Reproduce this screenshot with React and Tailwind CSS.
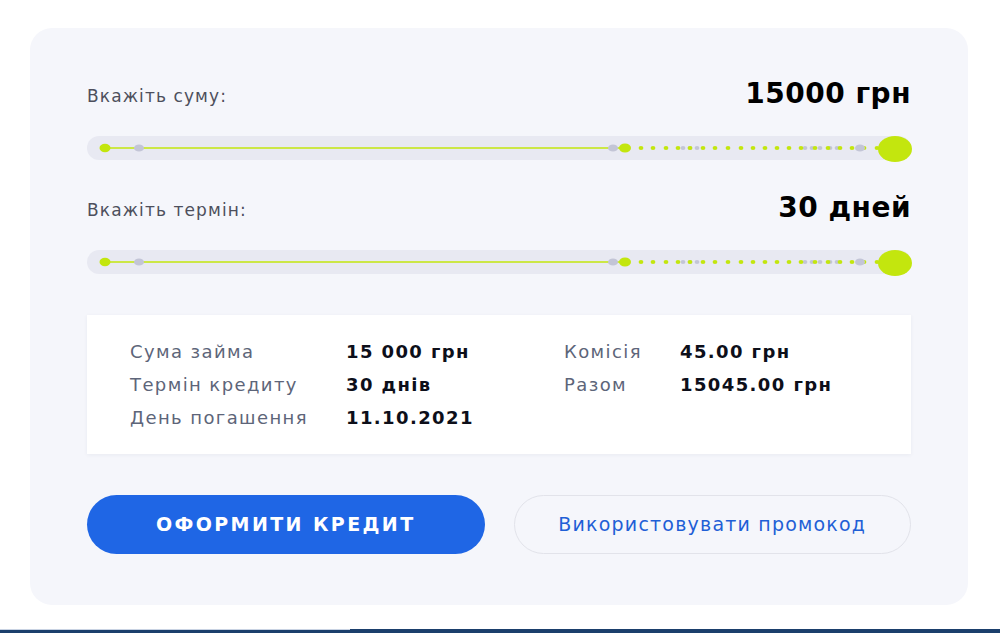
import React from 'react';

const LIME = '#c3e60e';
const GRAY = '#c3c5d6';

// green dots after the handle
const GREEN_DOTS = [554, 566, 579, 591, 603, 616, 628, 641, 654, 666, 678, 690, 702, 714, 728, 741, 753, 765, 777, 790];
const GRAY_DOTS = [596, 603, 610, 718, 725, 733, 743, 750];

function SliderTrack() {
  return (
    <div className="h-6 w-full rounded-full bg-[#e8e9f2]">
      <svg width="825" height="24" viewBox="0 0 825 24" className="overflow-visible">
        <line x1="18" y1="12" x2="538" y2="12" stroke={LIME} strokeWidth="1.6" />
        <ellipse cx="52" cy="12" rx="5" ry="3.6" fill={GRAY} />
        <ellipse cx="18" cy="12" rx="5.5" ry="4.2" fill={LIME} />
        <ellipse cx="526" cy="12" rx="5" ry="3.6" fill={GRAY} />
        <ellipse cx="538" cy="12" rx="6" ry="4.5" fill={LIME} />
        {GRAY_DOTS.map((x) => (
          <ellipse key={'g' + x} cx={x} cy="12" rx="2.4" ry="2" fill={GRAY} />
        ))}
        {GREEN_DOTS.map((x) => (
          <ellipse key={'l' + x} cx={x} cy="12" rx="2.4" ry="2" fill={LIME} />
        ))}
        <ellipse cx="773" cy="12" rx="5" ry="3.6" fill={GRAY} />
        <ellipse cx="808" cy="13" rx="17" ry="13" fill={LIME} />
      </svg>
    </div>
  );
}

function SliderBlock({ label, value }) {
  return (
    <div>
      <div className="flex items-end justify-between">
        <span className="text-[17px] text-[#4d4f5c] font-['DejaVu_Sans',sans-serif] tracking-[1.1px] leading-none mb-[3px]">{label}</span>
        <span className="text-[28px] font-bold text-black font-['DejaVu_Sans',sans-serif] tracking-[0.5px] leading-none">{value}</span>
      </div>
      <div className="mt-[28px]">
        <SliderTrack />
      </div>
    </div>
  );
}

function InfoRow({ label, value }) {
  return (
    <div className="flex items-center h-[33px]">
      <span className="w-[216px] text-[#5d6579]">{label}</span>
      <span className="font-bold text-[#0d0f1a]">{value}</span>
    </div>
  );
}

export default function App() {
  return (
    <div className="w-[1000px] h-[633px] bg-white flex flex-col">
      <div className="pt-[28px] px-[30px] flex-1">
        <div className="w-[938px] h-[577px] rounded-[22px] bg-[#f5f6fb] px-[57px] pt-[52px]">
          <div className="flex flex-col gap-[34px]">
            <SliderBlock label="Вкажіть суму:" value="15000 грн" />
            <SliderBlock label="Вкажіть термін:" value="30 дней" />
          </div>

          {/* summary */}
          <div className="mt-[41px] h-[139px] bg-white shadow-[0_1px_4px_rgba(40,50,90,0.06)] pl-[43px] pt-[20px] flex font-['DejaVu_Sans',sans-serif] text-[18px] tracking-[1.4px]">
            <div className="w-[434px]">
              <InfoRow label="Сума займа" value="15 000 грн" />
              <InfoRow label="Термін кредиту" value="30 днів" />
              <InfoRow label="День погашення" value="11.10.2021" />
            </div>
            <div>
              <div className="flex items-center h-[33px]">
                <span className="w-[116px] text-[#5d6579]">Комісія</span>
                <span className="font-bold text-[#0d0f1a]">45.00 грн</span>
              </div>
              <div className="flex items-center h-[33px]">
                <span className="w-[116px] text-[#5d6579]">Разом</span>
                <span className="font-bold text-[#0d0f1a]">15045.00 грн</span>
              </div>
            </div>
          </div>

          {/* buttons */}
          <div className="mt-[41px] flex gap-[29px]">
            <button className="w-[398px] h-[59px] rounded-full bg-[#1f66e5] text-white text-[19px] font-bold tracking-[2.4px] font-['DejaVu_Sans',sans-serif]">
              ОФОРМИТИ КРЕДИТ
            </button>
            <button className="w-[398px] h-[59px] rounded-full border border-[#e2e3ea] bg-[#f5f6fb] text-[#1f5fd6] text-[19px] tracking-[1.2px] font-['DejaVu_Sans',sans-serif]">
              Використовувати промокод
            </button>
          </div>
        </div>
      </div>
      <div className="h-[4px] flex">
        <div className="w-[350px] flex flex-col">
          <div className="h-px bg-[#c9d3e3]" />
          <div className="flex-1 bg-[#1b3f6c]" />
        </div>
        <div className="flex-1 bg-[#1b3f6c]" />
      </div>
    </div>
  );
}
